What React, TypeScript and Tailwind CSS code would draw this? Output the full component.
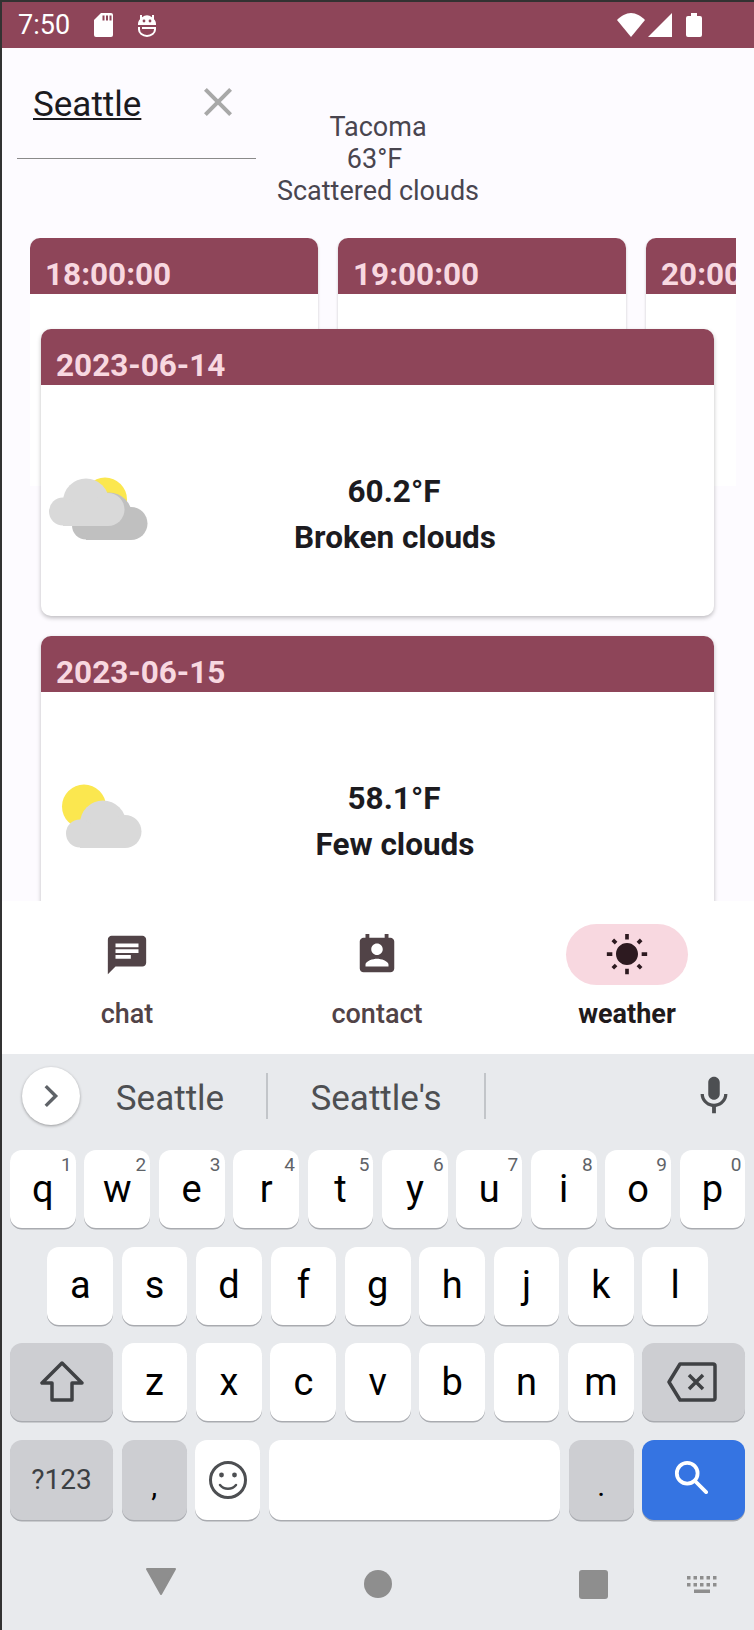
import React from "react";

const M = (p: { d: string; s: number; c: string }) => (
  <svg width={p.s} height={p.s} viewBox="0 0 24 24" fill={p.c}><path d={p.d} /></svg>
);

function Sd() {
  return <svg width="19" height="24" viewBox="0 0 19 24"><path fill="#fff" d="M7 0h10a2 2 0 0 1 2 2v20a2 2 0 0 1-2 2H2a2 2 0 0 1-2-2V7z" /><path fill="#8e4559" d="M8.5 2.5h2v5h-2zM12 2.5h2v5h-2zM15.5 2.5h2v5h-2z" /></svg>;
}
function S() {
  return (
    <svg width="18" height="24" viewBox="0 0 18 24">
      <path fill="#fff" d="M2 2h2v2.2a8 8 0 0 1 10 0V2h2v4.2c1.3 1.4 2 3 2 4.8v1H0v-1c0-1.8.7-3.4 2-4.8z" />
      <circle cx="6" cy="8" r="1.4" fill="#8e4559" />
      <circle cx="12" cy="8" r="1.4" fill="#8e4559" />
      <path fill="none" stroke="#fff" strokeWidth="2" d="M4 15h13v1.5a8 6.5 0 0 1-16 0V14" />
    </svg>
  );
}

function Cloud({ x, y, c }: { x: number; y: number; c: string }) {
  return (
    <g fill={c} transform={`translate(${x} ${y})`}>
      <circle cx="45" cy="26.5" r="23" />
      <circle cx="67" cy="34.5" r="16.5" />
      <circle cx="22" cy="36.5" r="14" />
      <rect x="22" y="30" width="45" height="21" />
    </g>
  );
}

function WeatherA() {
  return (
    <svg width="110" height="80" viewBox="0 0 110 80">
      <circle cx="64" cy="24.5" r="22" fill="#fbe74f" />
      <Cloud x={23} y={14} c="#c0c0c0" />
      <Cloud x={0} y={0} c="#d9d9d9" />
    </svg>
  );
}
function WeatherB() {
  return (
    <svg width="110" height="80" viewBox="0 0 110 80">
      <circle cx="43" cy="24.5" r="22" fill="#fbe74f" />
      <Cloud x={17} y={15} c="#d9d9d9" />
    </svg>
  );
}

function HourCard({ t }: { t: string }) {
  return (
    <div className="w-[288px] shrink-0 h-[260px] bg-white rounded-t-[10px] shadow-[0_1px_3px_rgba(0,0,0,0.2)] overflow-hidden">
      <div className="h-[56px] bg-[#8e4559] text-[#f8d8e0] font-bold text-[31.5px] leading-[40px] pl-[15px] pt-[17px] whitespace-nowrap">{t}</div>
    </div>
  );
}

function DayCard({ d, t, c, icon }: { d: string; t: string; c: string; icon: React.ReactNode }) {
  return (
    <div className="w-[673px] shrink-0 h-[287px] bg-white rounded-[10px] shadow-[0_2px_4px_rgba(0,0,0,0.25)] overflow-hidden flex flex-col">
      <div className="h-[56px] shrink-0 bg-[#8e4559] text-[#f8d8e0] font-bold text-[31.5px] leading-[40px] pl-[15px] pt-[17px]">{d}</div>
      <div className="flex-1 flex items-center pt-[28px]">
        <div className="w-[110px] shrink-0 flex">{icon}</div>
        <div className="flex-1 pr-[75px] text-center font-bold text-[#1c1b1f] text-[31.5px] leading-[46px]">
          <div className="pr-[2px]">{t}</div>
          <div>{c}</div>
        </div>
      </div>
    </div>
  );
}

function Tab({ label, active, icon }: { label: string; active?: boolean; icon: React.ReactNode }) {
  return (
    <div className="w-[250px] flex flex-col items-center pt-[23px]">
      <div className={"w-[122px] h-[61px] rounded-full flex items-center justify-center " + (active ? "bg-[#f8d8e0]" : "")}>{icon}</div>
      <div className={"mt-[11px] text-[27px] leading-[36px] " + (active ? "font-bold text-[#1f1a1c]" : "font-medium text-[#514347]")}>{label}</div>
    </div>
  );
}

function Key({ ch, n, dark, cls, children }: { ch?: string; n?: string; dark?: boolean; cls?: string; children?: React.ReactNode }) {
  return (
    <div className={"relative h-[78px] rounded-[12px] flex items-center justify-center shadow-[0_1.5px_0_#a9abb0] text-[38px] text-black " + (dark ? "bg-[#cdced2] " : "bg-white ") + (cls ?? "flex-1")}>
      {ch}
      {children}
      {n && <span className="absolute right-[4px] top-[3px] text-[19px] leading-[24px] text-[#5f6368]">{n}</span>}
    </div>
  );
}

export default function App() {
  const row1 = ["q", "w", "e", "r", "t", "y", "u", "i", "o", "p"];
  const nums = ["1", "2", "3", "4", "5", "6", "7", "8", "9", "0"];
  return (
    <div className="w-[754px] h-[1630px] bg-[#323232] pt-[2px] pl-[2px] overflow-hidden font-['Roboto',sans-serif]">
      <div className="h-full flex flex-col">
        <div className="h-[46px] shrink-0 bg-[#8e4559] flex items-center pl-[16px] pr-[52px] text-white">
          <span className="text-[27px] leading-[28px] w-[76px]">7:50</span>
          <span className="w-[44px] flex"><Sd /></span>
          <S />
          <span className="flex-1" />
          <svg width="28" height="24" viewBox="0 0 28 24" fill="#fff"><path d="M14 24 0 7C4 3 9 0 14 0s10 3 14 7z" /></svg>
          <svg className="ml-[3px]" width="24" height="24" viewBox="0 0 24 24" fill="#fff"><path d="M0 24 24 0v24z" /></svg>
          <svg className="ml-[14px]" width="16" height="24" viewBox="0 0 16 24" fill="#fff"><path d="M5 0h6v3h3a2 2 0 0 1 2 2v17a2 2 0 0 1-2 2H2a2 2 0 0 1-2-2V5a2 2 0 0 1 2-2h3z" /></svg>
        </div>

        <div className="flex-1 bg-[#fdfbff] overflow-hidden flex flex-col min-h-0">
          <div className="flex h-[190px] shrink-0">
            <div className="w-[239px] ml-[15px] h-[111px] border-b border-[#8a8a8a] flex items-start shrink-0">
              <span className="ml-[16px] mt-[34px] text-[35px] leading-[46px] underline decoration-[2px] underline-offset-[2px] text-[#1c1b1f]">Seattle</span>
              <svg className="ml-[53px] mt-[30px]" width="48" height="48" viewBox="0 0 24 24" fill="#a8a8a8"><path d="M19 6.41 17.59 5 12 10.59 6.41 5 5 6.41 10.59 12 5 17.59 6.41 19 12 13.41 17.59 19 19 17.59 13.41 12z" /></svg>
            </div>
            <div className="w-[244px] text-center text-[27px] leading-[32px] text-[#49454f] pt-[63px]">
              <div>Tacoma</div>
              <div className="pr-[7px]">63°F</div>
              <div>Scattered clouds</div>
            </div>
          </div>

          <div className="h-[248px] shrink-0 ml-[28px] w-[706px] overflow-hidden flex gap-[20px]">
            <HourCard t="18:00:00" />
            <HourCard t="19:00:00" />
            <HourCard t="20:00:00" />
          </div>

          <div className="-mt-[157px] relative pl-[39px] flex flex-col gap-[20px]">
            <DayCard d="2023-06-14" t="60.2°F" c="Broken clouds" icon={<WeatherA />} />
            <DayCard d="2023-06-15" t="58.1°F" c="Few clouds" icon={<WeatherB />} />
          </div>
        </div>

        <div className="h-[153px] shrink-0 bg-white flex relative z-10">
          <Tab label="chat" icon={<M s={46} c="#514347" d="M20 2H4c-1.1 0-1.99.9-1.99 2L2 22l4-4h14c1.1 0 2-.9 2-2V4c0-1.1-.9-2-2-2zM6 9h12v2H6V9zm8 5H6v-2h8v2zm4-6H6V6h12v2z" />} />
          <Tab label="contact" icon={<M s={46} c="#514347" d="M19 3h-1V1h-2v2H8V1H6v2H5c-1.11 0-2 .9-2 2v14c0 1.1.89 2 2 2h14c1.1 0 2-.9 2-2V5c0-1.1-.9-2-2-2zm-7 3c1.66 0 3 1.34 3 3s-1.34 3-3 3-3-1.34-3-3 1.34-3 3-3zm6 12H6v-1c0-2 4-3.1 6-3.1s6 1.1 6 3.1v1z" />} />
          <Tab label="weather" active icon={<M s={44} c="#2d1a20" d="M6.76 4.84l-1.8-1.79-1.41 1.41 1.79 1.79 1.42-1.41zM4 10.5H1v2h3v-2zm9-9.95h-2V3.5h2V.55zm7.45 3.91l-1.41-1.41-1.79 1.79 1.41 1.41 1.79-1.79zm-3.21 13.7l1.79 1.8 1.41-1.41-1.8-1.79-1.4 1.4zM20 10.5v2h3v-2h-3zm-8-5c-3.31 0-6 2.69-6 6s2.69 6 6 6 6-2.69 6-6-2.69-6-6-6zm-1 16.95h2V19.5h-2v2.95zm-7.45-3.91l1.41 1.41 1.79-1.8-1.41-1.41-1.79 1.8z" />} />
        </div>

        <div className="h-[576px] shrink-0 bg-[#e8eaed] flex flex-col">
          <div className="h-[96px] shrink-0 flex items-center pl-[20px] pr-[17px] pb-[12px] text-[#4d4f52]">
            <div className="w-[58px] h-[58px] rounded-full bg-white shadow-[0_1px_3px_rgba(0,0,0,0.35)] flex items-center justify-center">
              <svg className="mr-[3px]" width="34" height="34" viewBox="0 0 24 24" fill="none" stroke="#5f6368" strokeWidth="2.4"><path d="M9 5l7 7-7 7" /></svg>
            </div>
            <div className="w-[189px] pr-[5px] text-center text-[35px] border-r-2 border-[#c2c5c9] h-[46px] leading-[52px] ml-[-1px]">Seattle</div>
            <div className="w-[218px] text-center text-[35px] border-r-2 border-[#c2c5c9] h-[46px] leading-[52px]">Seattle's</div>
            <span className="flex-1" />
            <M s={46} c="#4d4f52" d="M12 14c1.66 0 3-1.34 3-3V5c0-1.66-1.34-3-3-3S9 3.34 9 5v6c0 1.66 1.34 3 3 3zm5.3-3c0 3-2.54 5.1-5.3 5.1S6.7 14 6.7 11H5c0 3.41 2.72 6.23 6 6.72V21h2v-3.28c3.28-.48 6-3.3 6-6.72h-1.7z" />
          </div>
          <div className="flex flex-col gap-[18.5px] pl-[8px] pr-[8.6px]">
            <div className="flex gap-[8.7px]">
              {row1.map((k, i) => <Key key={k} ch={k} n={nums[i]} />)}
            </div>
            <div className="flex gap-[8.7px] px-[37.4px]">
              {["a", "s", "d", "f", "g", "h", "j", "k", "l"].map((k) => <Key key={k} ch={k} />)}
            </div>
            <div className="flex gap-[8.7px]">
              <Key dark cls="w-[103px] shrink-0">
                <svg width="46" height="42" viewBox="0 0 46 42" fill="none" stroke="#3f4144" strokeWidth="3.5" strokeLinejoin="round"><path d="M23 2 3 22h10v17h20V22h10z" /></svg>
              </Key>
              {["z", "x", "c", "v", "b", "n", "m"].map((k) => <Key key={k} ch={k} />)}
              <Key dark cls="w-[103px] shrink-0">
                <svg className="mr-[4px]" width="50" height="40" viewBox="0 0 50 40" fill="none" stroke="#3f4144" strokeWidth="3.5" strokeLinejoin="round"><path d="M13 2h33a2 2 0 0 1 2 2v32a2 2 0 0 1-2 2H13L2 20z" /><path d="M22 13l14 14M36 13 22 27" strokeWidth="3.5" /></svg>
              </Key>
            </div>
            <div className="flex gap-[8.7px]">
              <div className="w-[103px] h-[80px] shrink-0 rounded-[12px] bg-[#cdced2] shadow-[0_1.5px_0_#a9abb0] flex items-center justify-center text-[28px] text-[#3c4043]">?123</div>
              <div className="w-[65px] h-[80px] shrink-0 rounded-[12px] bg-[#cdced2] shadow-[0_1.5px_0_#a9abb0] flex items-end justify-center text-[30px] text-black pb-[12px]">,</div>
              <div className="w-[65px] h-[80px] shrink-0 rounded-[12px] bg-white shadow-[0_1.5px_0_#a9abb0] flex items-center justify-center">
                <svg width="40" height="40" viewBox="0 0 40 40" fill="none" stroke="#4d4f52" strokeWidth="3"><circle cx="20" cy="20" r="17.5" /><path d="M12 25c4 5 12 5 16 0" strokeWidth="2.5" strokeLinecap="round" /><circle cx="13.5" cy="15" r="2.4" fill="#4d4f52" stroke="none" /><circle cx="26.5" cy="15" r="2.4" fill="#4d4f52" stroke="none" /></svg>
              </div>
              <div className="flex-1 h-[80px] rounded-[12px] bg-white shadow-[0_1.5px_0_#a9abb0]" />
              <div className="w-[65px] h-[80px] shrink-0 rounded-[12px] bg-[#cdced2] shadow-[0_1.5px_0_#a9abb0] flex items-end justify-center text-[30px] text-black pb-[12px]">.</div>
              <div className="w-[103px] h-[80px] shrink-0 rounded-[12px] bg-[#3574e2] shadow-[0_1.5px_0_#a9abb0] flex items-center justify-center pr-[5px] pb-[6px]">
                <svg width="34" height="34" viewBox="0 0 36 36" fill="none" stroke="#fff" strokeWidth="4"><circle cx="14" cy="14" r="11" /><path d="M22 22l12 12" strokeLinecap="round" /></svg>
              </div>
            </div>
          </div>
          <div className="flex items-start pt-[48px]">
            <svg className="ml-[144px]" width="30" height="27" viewBox="0 0 30 27" fill="#8e8e8e" stroke="#8e8e8e" strokeWidth="2" strokeLinejoin="round"><path d="M1 1h28L15 26z" /></svg>
            <div className="ml-[188px] mt-[2px] w-[28px] h-[28px] rounded-full bg-[#8e8e8e]" />
            <div className="ml-[187px] mt-[2px] w-[29px] h-[29px] rounded-[3px] bg-[#8e8e8e]" />
            <svg className="ml-[79px] mt-[8px]" width="30" height="18" viewBox="0 0 30 18" fill="#8e8e8e">
              <path d="M0 0h3.5v3.5H0zM6.500 0h3.500v3.500H6.500zM13 0h3.500v3.500H13zM19.500 0H23v3.500h-3.500zM26 0h3.500v3.500H26zM0 7h3.500v3.500H0zM6.500 7h3.500v3.500H6.500zM13 7h3.500v3.500H13zM19.500 7H23v3.500h-3.500zM26 7h3.500v3.500H26zM7 13.500h16V17H7z" />
            </svg>
          </div>
        </div>
      </div>
    </div>
  );
}
